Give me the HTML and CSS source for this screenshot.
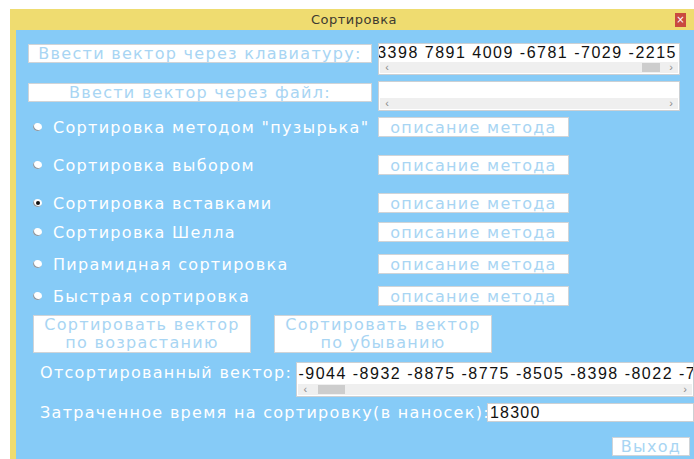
FILE: index.html
```html
<!DOCTYPE html>
<html lang="ru">
<head>
<meta charset="utf-8">
<title>Сортировка</title>
<link rel="stylesheet" href="styles.css">
</head>
<body>
<div class="window">
  <div class="titlebar">
    <span class="title">Сортировка</span>
    <span class="close">×</span>
  </div>
  <div class="client">
    <div class="inputs">
      <div class="btn btn-input">Ввести вектор через клавиатуру:</div>
      <div class="textbox tb-keyboard">
        <div class="value">3398 7891 4009 -6781 -7029 -2215</div>
        <div class="scrollbar">
          <span class="arrow">&lsaquo;</span>
          <span class="track"><span class="thumb thumb-end"></span></span>
          <span class="arrow">&rsaquo;</span>
        </div>
      </div>
      <div class="btn btn-input btn-file">Ввести вектор через файл:</div>
      <div class="textbox tb-file">
        <div class="value"></div>
        <div class="scrollbar">
          <span class="arrow">&lsaquo;</span>
          <span class="track"></span>
          <span class="arrow">&rsaquo;</span>
        </div>
      </div>
    </div>

    <div class="methods">
      <div class="method">
        <span class="radio"></span>
        <span class="method-label">Сортировка методом "пузырька"</span>
        <div class="btn btn-info">описание метода</div>
      </div>
      <div class="method gap-wide">
        <span class="radio"></span>
        <span class="method-label">Сортировка выбором</span>
        <div class="btn btn-info">описание метода</div>
      </div>
      <div class="method gap-wide">
        <span class="radio checked"></span>
        <span class="method-label">Сортировка вставками</span>
        <div class="btn btn-info">описание метода</div>
      </div>
      <div class="method gap-tight">
        <span class="radio"></span>
        <span class="method-label">Сортировка Шелла</span>
        <div class="btn btn-info">описание метода</div>
      </div>
      <div class="method gap-mid">
        <span class="radio"></span>
        <span class="method-label">Пирамидная сортировка</span>
        <div class="btn btn-info">описание метода</div>
      </div>
      <div class="method gap-mid">
        <span class="radio"></span>
        <span class="method-label">Быстрая сортировка</span>
        <div class="btn btn-info">описание метода</div>
      </div>
    </div>

    <div class="sort-row">
      <div class="btn btn-sort">
        <span class="line">Сортировать вектор</span>
        <span class="line">по возрастанию</span>
      </div>
      <div class="btn btn-sort">
        <span class="line">Сортировать вектор</span>
        <span class="line">по убыванию</span>
      </div>
    </div>

    <div class="result-row">
      <span class="field-label label-sorted">Отсортированный вектор:</span>
      <div class="textbox tb-sorted">
        <div class="value value-start">-9044 -8932 -8875 -8775 -8505 -8398 -8022 -7513</div>
        <div class="scrollbar">
          <span class="arrow">&lsaquo;</span>
          <span class="track"><span class="thumb thumb-start"></span></span>
          <span class="arrow">&rsaquo;</span>
        </div>
      </div>
    </div>

    <div class="time-row">
      <span class="field-label label-time">Затраченное время на сортировку(в наносек):</span>
      <div class="single-input">18300</div>
    </div>

    <div class="footer">
      <div class="btn btn-exit">Выход</div>
    </div>
  </div>
</div>
</body>
</html>
```
FILE: styles.css
```css
* {
  box-sizing: border-box;
}

html,
body {
  margin: 0;
  padding: 0;
  background: #ffffff;
  overflow: hidden;
}

body {
  font-family: "DejaVu Sans", sans-serif;
}

/* window frame */
.window {
  margin: 9px 0 0 10px;
  width: 684px;
  height: 450px;
  background: #efdc70;
  display: flex;
  flex-direction: column;
}

.titlebar {
  height: 21px;
  display: grid;
  grid-template-columns: 1fr auto 1fr;
  align-items: center;
}

.title {
  grid-column: 2;
  font-size: 13px;
  color: #3d3a30;
  letter-spacing: 0.5px;
  margin-left: 4px;
}

.close {
  grid-column: 3;
  justify-self: end;
  margin-right: 8px;
  margin-top: 1px;
  width: 11px;
  height: 14px;
  background: #c94a3f;
  color: #ffffff;
  font-size: 10px;
  line-height: 14px;
  text-align: center;
}

.client {
  flex: 1;
  margin-left: 6px;
  background: #86cbf7;
  overflow: hidden;
  padding-top: 13px;
}

/* flat white buttons with pale blue captions */
.btn {
  background: #ffffff;
  border: 1px solid #cfd4d8;
  color: #a8d5f3;
  font-size: 16px;
  letter-spacing: 1.3px;
  display: flex;
  align-items: center;
  justify-content: center;
  white-space: nowrap;
}

/* input selection block */
.inputs {
  display: grid;
  grid-template-columns: 344px 302px;
  grid-template-rows: 32px 30px;
  column-gap: 6px;
  row-gap: 6px;
  margin-left: 12px;
}

.btn-input {
  height: 19px;
  margin-top: 1px;
}

.btn-file {
  margin-top: 2px;
}

.textbox {
  background: #ffffff;
  border: 1px solid #cbd0d4;
  display: flex;
  flex-direction: column;
  overflow: hidden;
}

.value {
  flex: 1;
  display: flex;
  justify-content: flex-end;
  align-items: center;
  white-space: nowrap;
  overflow: hidden;
  font-family: "Liberation Sans", Arial, sans-serif;
  font-size: 16px;
  letter-spacing: 1.5px;
  color: #111111;
  padding-right: 2px;
}

.value-start {
  justify-content: flex-start;
  padding-left: 1px;
}

.scrollbar {
  height: 11px;
  margin: 0 1px 1px;
  background: #efefef;
  display: flex;
  align-items: center;
}

.arrow {
  width: 14px;
  text-align: center;
  color: #8a8a8a;
  font-family: "Liberation Sans", sans-serif;
  font-size: 11px;
  line-height: 11px;
}

.track {
  flex: 1;
  height: 100%;
  display: flex;
  align-items: center;
}

.thumb {
  height: 9px;
  background: #cdcdcd;
}

.thumb-end {
  width: 18px;
  margin-left: auto;
  margin-right: 4px;
}

.thumb-start {
  width: 27px;
  margin-left: 6px;
}

/* sorting method list */
.methods {
  margin-top: 6px;
  display: flex;
  flex-direction: column;
}

.method {
  display: flex;
  align-items: center;
  height: 20px;
  padding-left: 17px;
}

.gap-wide {
  margin-top: 18px;
}

.gap-tight {
  margin-top: 9px;
}

.gap-mid {
  margin-top: 12px;
}

.radio {
  width: 9px;
  height: 8px;
  border-radius: 50%;
  background: #ffffff;
  box-shadow: inset 1px -1px 0 #8d9aa4;
  display: flex;
  align-items: center;
  justify-content: center;
}

.radio.checked::after {
  content: "";
  width: 4px;
  height: 4px;
  border-radius: 50%;
  background: #111111;
}

.method-label {
  width: 325px;
  margin-left: 11px;
  color: #ffffff;
  font-size: 16px;
  letter-spacing: 1.3px;
  white-space: nowrap;
}

.btn-info {
  width: 191px;
  height: 20px;
}

/* sort action buttons */
.sort-row {
  display: flex;
  gap: 23px;
  margin: 9px 0 0 17px;
}

.btn-sort {
  width: 218px;
  height: 38px;
  flex-direction: column;
}

.btn-sort .line {
  display: block;
  line-height: 18px;
}

/* result fields */
.field-label {
  color: #ffffff;
  font-size: 16px;
  letter-spacing: 1.3px;
  white-space: nowrap;
  padding-left: 24px;
}

.result-row {
  display: flex;
  align-items: flex-start;
  margin-top: 9px;
}

.label-sorted {
  width: 282px;
  line-height: 20px;
  margin-top: 1px;
}

.tb-sorted {
  width: 400px;
  height: 35px;
}

.time-row {
  display: flex;
  align-items: center;
  margin-top: 6px;
}

.label-time {
  width: 471px;
}

.single-input {
  width: 210px;
  height: 19px;
  background: #ffffff;
  border: 1px solid #cbd0d4;
  font-family: "Liberation Sans", Arial, sans-serif;
  font-size: 16px;
  letter-spacing: 1.2px;
  color: #111111;
  line-height: 17px;
  padding-left: 2px;
}

.footer {
  display: flex;
  justify-content: flex-end;
  margin-top: 15px;
  padding-right: 4px;
}

.btn-exit {
  width: 78px;
  height: 19px;
}
```
